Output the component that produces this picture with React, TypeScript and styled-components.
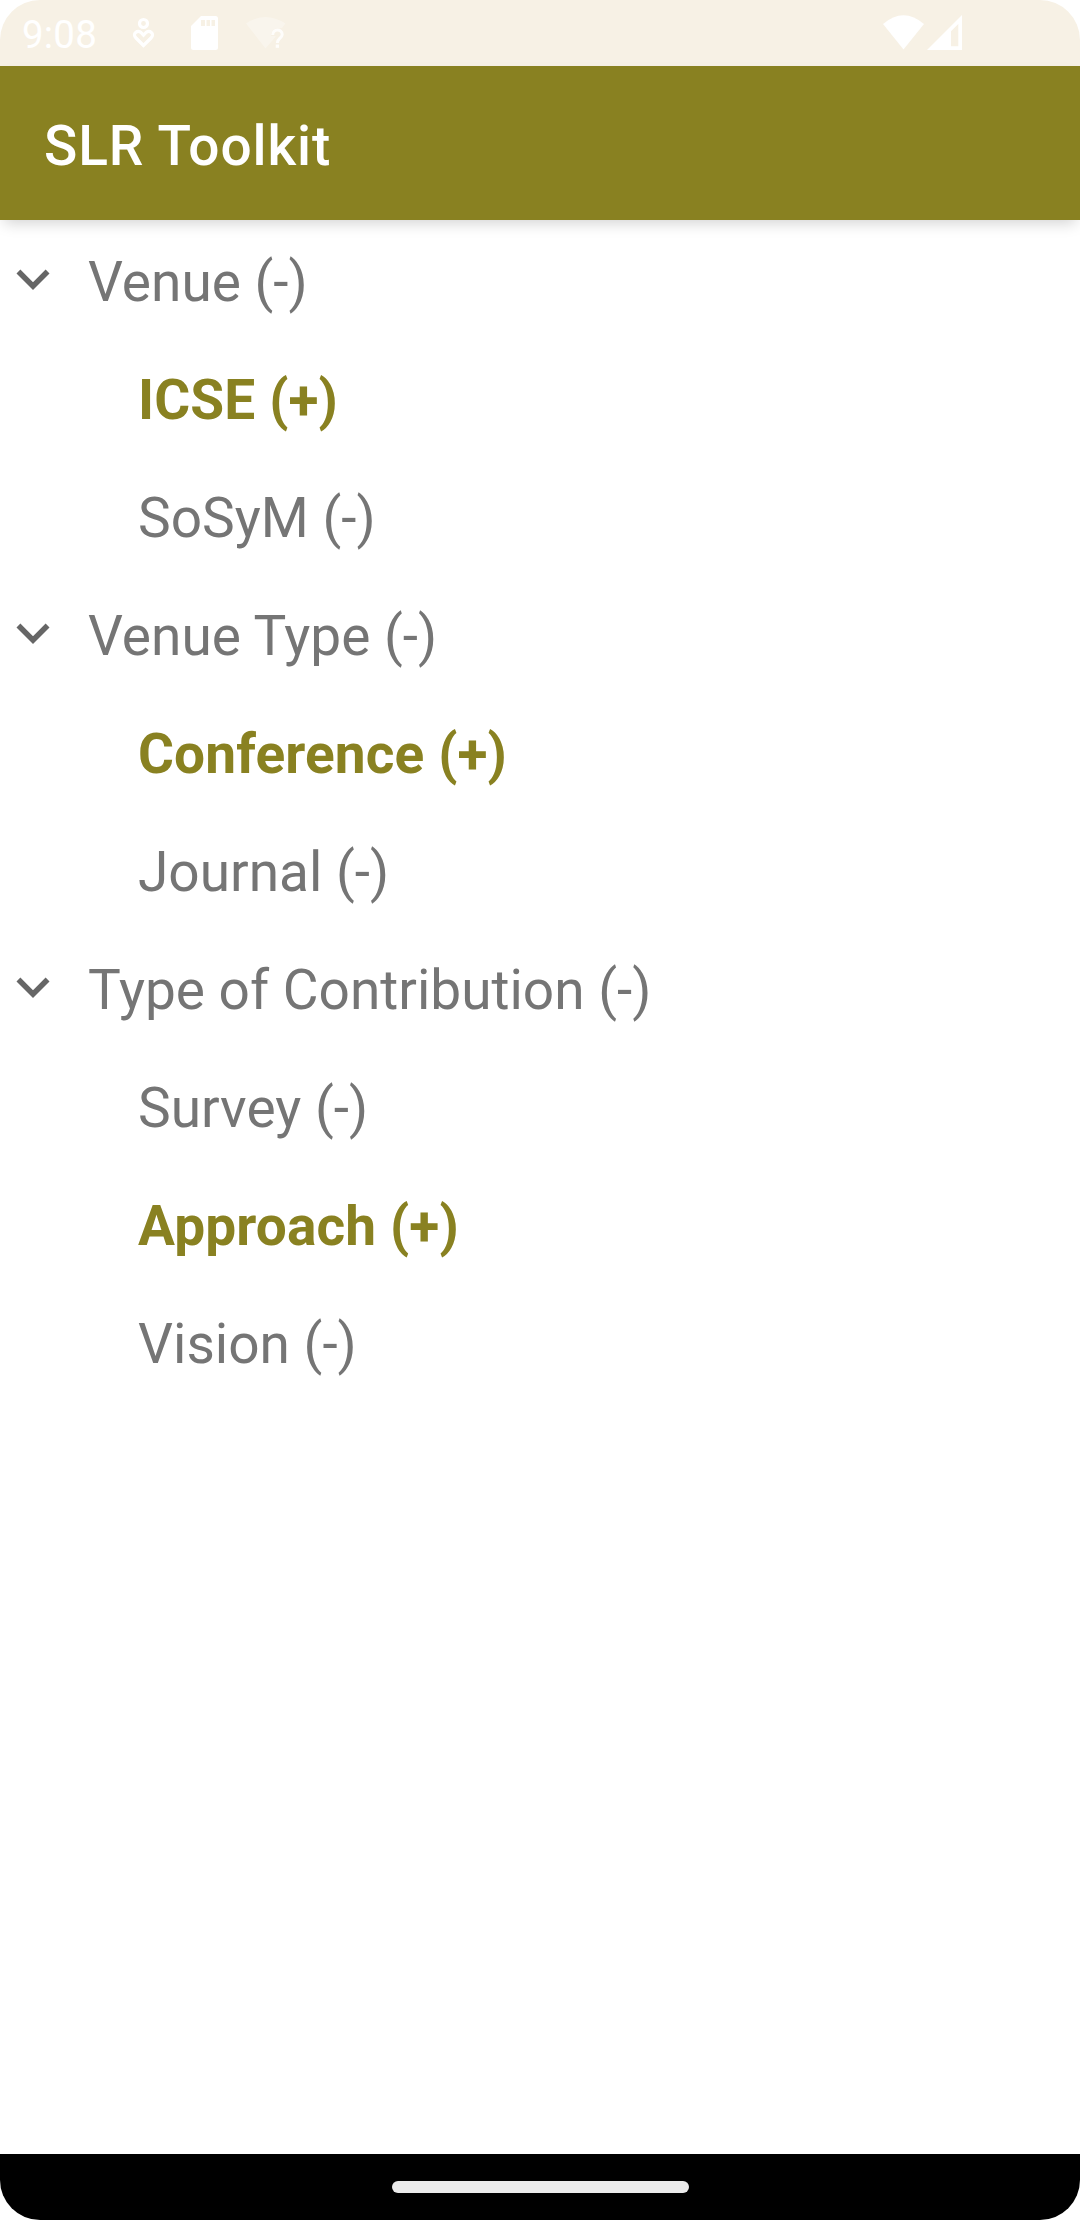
import React from "react";
import styled, { createGlobalStyle } from "styled-components";

const GlobalStyle = createGlobalStyle`
  *, *::before, *::after { box-sizing: border-box; }
  body { margin: 0; background: #fff; }
`;

const Screen = styled.div`
  display: flex;
  flex-direction: column;
  width: 1080px;
  height: 2220px;
  overflow: hidden;
  border-radius: 40px;
  background: #fff;
  font-family: Roboto, "Liberation Sans", sans-serif;
`;

const StatusBar = styled.header`
  flex: none;
  display: flex;
  align-items: flex-start;
  height: 66px;
  padding: 0 117px 0 22px;
  background: #f7f1e5;
  color: #fff;
`;

const Clock = styled.span`
  width: 105px;
  padding-top: 12px;
  font-size: 38.5px;
  line-height: 45px;
  letter-spacing: 0.2px;
  white-space: nowrap;
`;

const StatusIcons = styled.svg<{ $push?: boolean }>`
  display: block;
  flex: none;
  margin-left: ${({ $push }) => ($push ? "auto" : "0")};
`;

const AppBar = styled.div`
  flex: none;
  display: flex;
  align-items: center;
  height: 154px;
  padding: 6px 44px 0;
  background: #898121;
  box-shadow: 0 7px 14px -4px rgba(0, 0, 0, 0.18);
`;

const Title = styled.h1`
  margin: 0;
  color: #fff;
  font-size: 55px;
  font-weight: 500;
  line-height: 64px;
  letter-spacing: 0.9px;
`;

const Tree = styled.main`
  flex: 1;
  display: flex;
  flex-direction: column;
`;

const Row = styled.div`
  display: flex;
  align-items: center;
  height: 118px;
`;

const Gutter = styled.span<{ $leaf?: boolean }>`
  flex: none;
  display: flex;
  width: ${({ $leaf }) => ($leaf ? 138 : 88)}px;
`;

const Label = styled.span<{ $selected?: boolean }>`
  padding-top: 5px;
  color: ${({ $selected }) => ($selected ? "#898121" : "#757575")};
  font-size: 55px;
  font-weight: ${({ $selected }) => ($selected ? 700 : 400)};
  line-height: 64px;
  letter-spacing: ${({ $selected }) => ($selected ? "0.12px" : "normal")};
  white-space: nowrap;
`;

const NavBar = styled.footer`
  flex: none;
  display: flex;
  justify-content: center;
  height: 66px;
  padding-top: 27px;
  background: #000;
`;

const HomeHandle = styled.span`
  width: 297px;
  height: 12px;
  border-radius: 6px;
  background: #ebebeb;
`;

type Leaf = { name: string; selected?: boolean };
type Group = { name: string; items: Leaf[] };

const taxonomy: Group[] = [
  { name: "Venue", items: [{ name: "ICSE", selected: true }, { name: "SoSyM" }] },
  { name: "Venue Type", items: [{ name: "Conference", selected: true }, { name: "Journal" }] },
  {
    name: "Type of Contribution",
    items: [{ name: "Survey" }, { name: "Approach", selected: true }, { name: "Vision" }],
  },
];

const Chevron = () => (
  <svg width="66" height="66" viewBox="0 0 24 24" fill="#666">
    <path d="M16.59 8.59 12 13.17 7.41 8.59 6 10l6 6 6-6z" />
  </svg>
);

const NotificationIcons = () => (
  <StatusIcons width="170" height="66" viewBox="127 0 170 66">
    <g fill="none" stroke="#fff" strokeWidth="3.2">
      <circle cx="143.5" cy="23.5" r="4" />
      <path d="M143.5 45.5 136 38C131.500 33.500 138 29.500 141 32.500L143.500 35.200 146 32.500C149 29.500 155.500 33.500 151 38Z" />
    </g>
    <path
      fill="#fff"
      fillRule="evenodd"
      d="M201 16h14.500a2.500 2.500 0 0 1 2.500 2.500v29a2.500 2.500 0 0 1-2.500 2.500h-22a2.500 2.500 0 0 1-2.500-2.500V26zM201 20v6h4v-6zm5.500 0v6h3.500v-6zm5 0v6h3.500v-6z"
    />
    <path
      fill="#fff"
      fillOpacity="0.3"
      d="M246 23.500Q265.500 10.500 285.500 23.500L282 28Q271 27 271 36H275.500V37L265.500 48.500Z"
    />
    <path
      fill="none"
      stroke="#fff"
      strokeOpacity="0.85"
      strokeWidth="3"
      d="M272.700 35C272.700 28.500 282.200 28.500 282.200 34.500C282.200 38 277.300 38.500 277.300 43"
    />
    <rect x="275.700" y="44.500" width="3.300" height="3.300" fill="#fff" fillOpacity="0.85" />
  </StatusIcons>
);

const SignalIcons = () => (
  <StatusIcons $push width="82" height="66" viewBox="881 0 82 66" fill="#fff">
    <path d="M883 24Q903.500 6.500 924 24L903.500 49.500Z" />
    <path fillRule="evenodd" d="M962 15V50H927ZM958.300 24 951 31.300V46.300H958.300Z" />
  </StatusIcons>
);

export default function App() {
  return (
    <>
      <GlobalStyle />
      <Screen>
        <StatusBar>
          <Clock>9:08</Clock>
          <NotificationIcons />
          <SignalIcons />
        </StatusBar>
        <AppBar>
          <Title>SLR Toolkit</Title>
        </AppBar>
        <Tree>
          {taxonomy.map((group) => (
            <React.Fragment key={group.name}>
              <Row>
                <Gutter>
                  <Chevron />
                </Gutter>
                <Label>{group.name} (-)</Label>
              </Row>
              {group.items.map((item) => (
                <Row key={item.name}>
                  <Gutter $leaf />
                  <Label $selected={item.selected}>
                    {item.name} {item.selected ? "(+)" : "(-)"}
                  </Label>
                </Row>
              ))}
            </React.Fragment>
          ))}
        </Tree>
        <NavBar>
          <HomeHandle />
        </NavBar>
      </Screen>
    </>
  );
}
